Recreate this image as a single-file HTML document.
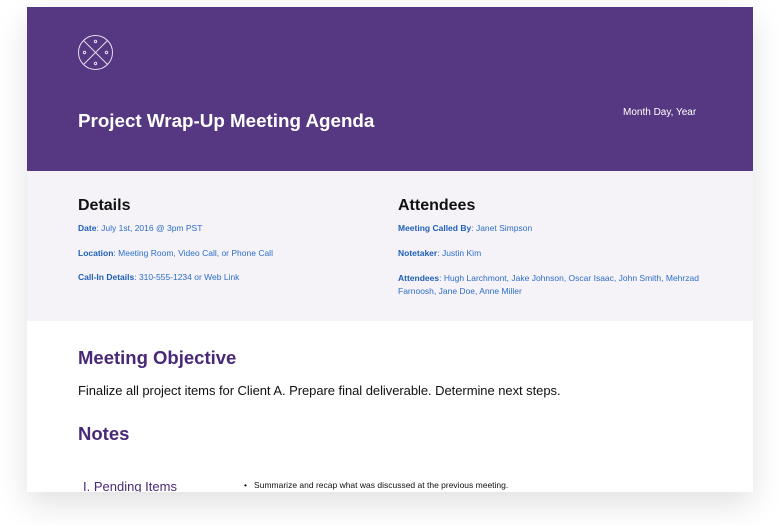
<!DOCTYPE html>
<html><head><style>
body{margin:0;width:780px;height:525px;background:#fff;overflow:hidden;font-family:"Liberation Sans",sans-serif;position:relative}
.card{position:absolute;left:27px;top:7px;width:726px;height:485px;background:#fff;box-shadow:0 12px 30px rgba(0,0,0,0.12);overflow:hidden}
.hdr{position:absolute;left:0;top:0;width:726px;height:164px;background:#553881}
.band{position:absolute;left:0;top:164px;width:726px;height:150px;background:#f5f3f8}
.t{position:absolute;white-space:nowrap}
.h2{font-weight:bold;font-size:16px;color:#111}
.s{font-size:8.5px;color:#2c6ec8}
.s b{color:#1e5fb8}
.ph{font-weight:bold;font-size:18.5px;color:#4a2878}
</style></head><body>
<div class="card">
<div class="hdr">
<svg style="position:absolute;left:50px;top:27px" width="37" height="37" viewBox="0 0 37 37"><g fill="none" stroke="#e6dff0" stroke-width="1"><circle cx="18.5" cy="18.5" r="17"/><line x1="6.5" y1="6.5" x2="30.5" y2="30.5"/><line x1="30.5" y1="6.5" x2="6.5" y2="30.5"/><circle cx="18.5" cy="7.5" r="1.2"/><circle cx="7.5" cy="18.5" r="1.2"/><circle cx="29.5" cy="18.5" r="1.2"/><circle cx="18.5" cy="29.5" r="1.2"/></g></svg>
<div class="t" style="left:51px;top:103px;font-size:18.8px;font-weight:bold;color:#fff">Project Wrap-Up Meeting Agenda</div>
<div class="t" style="left:596px;top:100px;font-size:10px;color:#fff">Month Day, Year</div>
</div>
<div class="band">
<div class="t h2" style="left:51px;top:26px">Details</div>
<div class="t s" style="left:51px;top:52px"><b>Date</b>: July 1st, 2016 @ 3pm PST</div>
<div class="t s" style="left:51px;top:77px"><b>Location</b>: Meeting Room, Video Call, or Phone Call</div>
<div class="t s" style="left:51px;top:101px"><b>Call-In Details</b>: 310-555-1234 or Web Link</div>
<div class="t h2" style="left:371px;top:26px">Attendees</div>
<div class="t s" style="left:371px;top:52px"><b>Meeting Called By</b>: Janet Simpson</div>
<div class="t s" style="left:371px;top:77px"><b>Notetaker</b>: Justin Kim</div>
<div class="t s" style="left:371px;top:101px;line-height:12.5px"><b>Attendees</b>: Hugh Larchmont, Jake Johnson, Oscar Isaac, John Smith, Mehrzad<br>Farnoosh, Jane Doe, Anne Miller</div>
</div>
<div class="t ph" style="left:51px;top:340px">Meeting Objective</div>
<div class="t" style="left:51px;top:376px;font-size:13px;color:#111;letter-spacing:-0.05px">Finalize all project items for Client A. Prepare final deliverable. Determine next steps.</div>
<div class="t ph" style="left:51px;top:416px">Notes</div>
<div class="t" style="left:56px;top:472px;font-size:13px;color:#4a2878">I. Pending Items</div>
<div class="t" style="left:217px;top:473px;font-size:8.5px;color:#111">•&nbsp;&nbsp; Summarize and recap what was discussed at the previous meeting.</div>
</div>
</body></html>
